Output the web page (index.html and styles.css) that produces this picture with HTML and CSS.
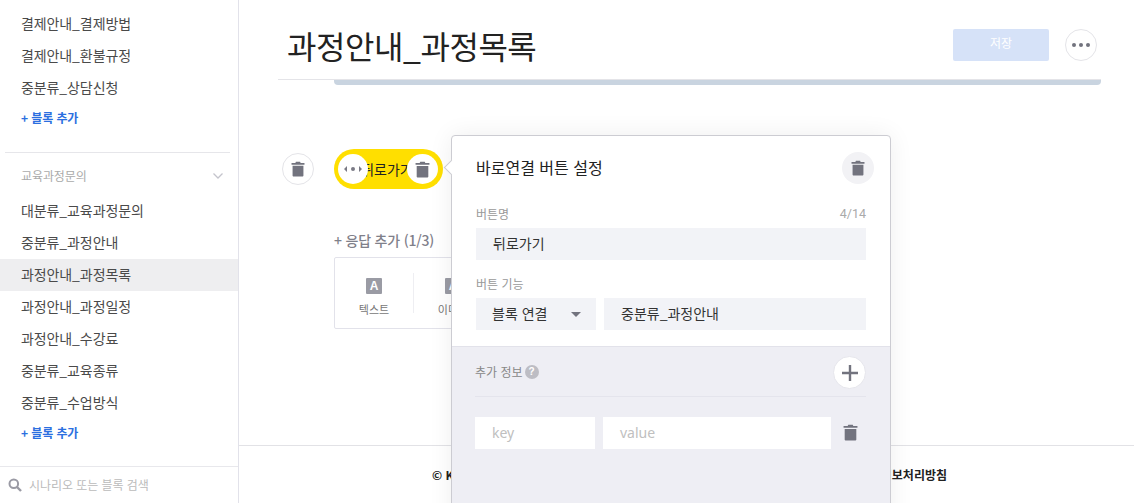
FILE: index.html
```html
<!DOCTYPE html>
<html lang="ko">
<head>
<meta charset="utf-8">
<title>과정안내_과정목록</title>
<link rel="stylesheet" href="styles.css">
</head>
<body>
<svg class="defs" width="0" height="0" aria-hidden="true">
  <symbol id="trash" viewBox="0 0 16 18"><path d="M5.6 0.6h4.8l.6 1.4H15.4v2H.6V2h4.4zM1.8 5.2h12.4V16.4c0 .7-.6 1.2-1.2 1.2H3c-.6 0-1.2-.5-1.2-1.2z"/></symbol>
</svg>
<div class="app">
  <aside class="sidebar">
    <div class="side-scroll">
      <ul class="list">
        <li class="item">결제안내_결제방법</li>
        <li class="item">결제안내_환불규정</li>
        <li class="item">중분류_상담신청</li>
      </ul>
      <div class="add-block">+ 블록 추가</div>
      <hr class="side-rule">
      <div class="group-head">
        <span>교육과정문의</span>
        <svg class="chev" width="12" height="8" viewBox="0 0 12 8"><path d="M1.5 1.5 6 6l4.5-4.5" fill="none" stroke="#c4c4cc" stroke-width="1.3"/></svg>
      </div>
      <ul class="list">
        <li class="item">대분류_교육과정문의</li>
        <li class="item">중분류_과정안내</li>
        <li class="item active">과정안내_과정목록</li>
        <li class="item">과정안내_과정일정</li>
        <li class="item">과정안내_수강료</li>
        <li class="item">중분류_교육종류</li>
        <li class="item">중분류_수업방식</li>
      </ul>
      <div class="add-block">+ 블록 추가</div>
    </div>
    <div class="search">
      <svg width="14" height="14" viewBox="0 0 14 14"><circle cx="5.8" cy="5.8" r="4.3" fill="none" stroke="#9a9aa4" stroke-width="2"/><path d="M9 9l4 4" stroke="#9a9aa4" stroke-width="2.4"/></svg>
      <span class="search-text">시나리오 또는 블록 검색</span>
    </div>
  </aside>

  <main class="main">
    <header class="head">
      <h1 class="title">과정안내_과정목록</h1>
      <div class="head-actions">
        <button class="save">저장</button>
        <button class="more" aria-label="더보기"><i></i><i></i><i></i></button>
      </div>
    </header>

    <div class="content">
      <div class="bar"></div>
      <div class="quick-row">
        <button class="circle trash-btn" aria-label="삭제"><svg class="ico" width="14" height="16"><use href="#trash"/></svg></button>
        <div class="pill">
          <span class="pill-text">뒤로가기</span>
          <span class="pill-handle">
            <svg width="20" height="8" viewBox="0 0 20 8"><path d="M4 1v6L1 4zM16 1v6l3-3z" fill="#7a7a85"/><circle cx="10" cy="4" r="2" fill="#7a7a85"/></svg>
          </span>
          <span class="pill-del"><svg class="ico" width="15" height="17"><use href="#trash"/></svg></span>
        </div>
      </div>
      <div class="add-resp">+ 응답 추가 (1/3)</div>
      <div class="types">
        <div class="type"><span class="a-icon">A</span><span>텍스트</span></div>
        <div class="type"><span class="a-icon">A</span><span>이미지</span></div>
      </div>
    </div>

    <footer class="foot">
      <b>© Kakao Corp. All rights reserved.</b>
      <b>이용약관</b><b>운영정책</b><b>개인정보처리방침</b>
    </footer>

    <section class="pop">
      <span class="pop-arrow"></span>
      <div class="pop-top">
        <div class="pop-title">
          <h2 class="pop-heading">바로연결 버튼 설정</h2>
          <button class="circle-soft" aria-label="삭제"><svg class="ico" width="14" height="16"><use href="#trash"/></svg></button>
        </div>
        <div class="label-row"><span>버튼명</span><span class="count">4/14</span></div>
        <div class="field">뒤로가기</div>
        <div class="label-row second"><span>버튼 기능</span></div>
        <div class="field-row">
          <div class="field select">블록 연결<span class="caret"></span></div>
          <div class="field grow">중분류_과정안내</div>
        </div>
      </div>
      <div class="pop-extra">
        <div class="extra-head">
          <span class="extra-label">추가 정보</span>
          <span class="help">?</span>
          <button class="plus" aria-label="추가"><svg width="16" height="16" viewBox="0 0 16 16"><path d="M6.8 0h2.4v6.8H16v2.4H9.2V16H6.8V9.2H0V6.8h6.8z" fill="#72737e"/></svg></button>
        </div>
        <div class="kv">
          <div class="kv-key">key</div>
          <div class="kv-val">value</div>
          <svg class="ico kv-del" width="15" height="17"><use href="#trash"/></svg>
        </div>
      </div>
    </section>
  </main>
</div>
</body>
</html>
```

FILE: styles.css
```css
* { box-sizing: border-box; }
html, body { margin: 0; height: 100%; overflow: hidden; background: #fff; }
body { font-family: "Noto Sans CJK KR", "Noto Sans", sans-serif; font-size: 14px; color: #222; }
.defs { position: absolute; }
button { font: inherit; padding: 0; cursor: pointer; }
.ico { fill: #72737e; display: block; }

.app { display: flex; height: 503px; }

.sidebar { width: 239px; flex: none; border-right: 1px solid #e2e2ea; display: flex; flex-direction: column; }
.side-scroll { flex: 1; padding-top: 8px; overflow: hidden; }
.list { list-style: none; margin: 0; padding: 0; }
.item { height: 32px; line-height: 30px; padding-left: 21px; font-size: 14px; letter-spacing: -.1px; color: #4a4a4a; white-space: nowrap; }
.item.active { background: #eeeef0; }
.add-block { height: 28px; line-height: 28px; padding-left: 21px; font-size: 12px; font-weight: 700; letter-spacing: -.1px; color: #2b6fe0; }
.side-rule { border: 0; border-top: 1px solid #e6e6ea; margin: 20px 8px 0 5px; }
.group-head { height: 42px; display: flex; align-items: center; justify-content: space-between; padding: 3px 14px 0 21px; font-size: 12px; letter-spacing: -.1px; color: #aaa; }
.search { height: 37px; border-top: 1px solid #e8e8ec; display: flex; align-items: center; gap: 7px; padding-left: 8px; font-size: 12px; color: #bbb; flex: none; }
.search-text { line-height: 16px; margin-top: -1px; letter-spacing: -.05px; }

.main { flex: 1; position: relative; display: flex; flex-direction: column; min-width: 0; overflow: hidden; }
.head { height: 80px; margin: 0 33px 0 39px; border-bottom: 1px solid #e4e4e8; padding: 0 4px 0 9px; display: flex; justify-content: space-between; align-items: flex-start; flex: none; }
.title { margin: 21px 0 0; font-size: 32px; line-height: 48px; font-weight: 400; color: #222; letter-spacing: -.45px; white-space: nowrap; }
.head-actions { display: flex; gap: 16px; margin-top: 29px; }
.save { width: 96px; height: 32px; border: 0; border-radius: 2px; background: #d6e2f8; color: #fff; font-size: 12px; padding-bottom: 5px; }
.more { width: 32px; height: 32px; border-radius: 50%; background: #fff; border: 1px solid #e4e4e8; display: flex; align-items: center; justify-content: center; gap: 3px; }
.more i { width: 4px; height: 4px; border-radius: 50%; background: #72737e; }

.content { flex: 1; margin: 0 33px 0 43px; min-height: 0; }
.bar { height: 5px; margin-left: 52px; background: #c9d4e0; border-radius: 0 0 4px 4px; }
.quick-row { display: flex; align-items: center; gap: 20px; margin-top: 64px; }
.circle { width: 32px; height: 32px; border-radius: 50%; border: 1px solid #e4e4e8; background: #fff; display: flex; align-items: center; justify-content: center; }
.pill { position: relative; width: 109px; height: 40px; border-radius: 20px; background: #ffdf00; display: flex; align-items: center; justify-content: center; padding-right: 3px; font-size: 14px; color: #222; }
.pill-handle, .pill-del { position: absolute; top: 5px; width: 30px; height: 30px; border-radius: 50%; background: #fff; display: flex; align-items: center; justify-content: center; }
.pill-handle { left: 4px; }
.pill-del { right: 5px; width: 31px; }
.add-resp { margin: 41px 0 0 52px; font-size: 14px; line-height: 20px; font-weight: 500; letter-spacing: -.2px; color: #7f808a; }
.types { margin: 7px 0 0 52px; width: 330px; height: 72px; border: 1px solid #e2e2ea; border-radius: 2px; background: #fff; display: flex; align-items: center; }
.type { width: 79px; height: 40px; padding-top: 5px; border-right: 1px solid #eeeef2; display: flex; flex-direction: column; align-items: center; gap: 7px; font-size: 11px; line-height: 17px; color: #777; }
.a-icon { width: 16px; height: 16px; flex: none; background: #9a9ba4; color: #fff; font: 700 12px/16px "Liberation Sans", sans-serif; text-align: center; border-radius: 1px; }

.foot { height: 58px; flex: none; border-top: 1px solid #e2e2e6; display: flex; align-items: center; justify-content: center; gap: 45.5px; font-size: 12px; padding-left: 6px; color: #222; }
.foot b { font-weight: 700; }

.pop { position: absolute; left: 212px; top: 135px; width: 440px; height: 400px; background: #fff; border: 1px solid #ccccd2; border-radius: 4px 4px 0 0; box-shadow: 0 0 24px rgba(0,0,0,.07); }
.pop-arrow { position: absolute; left: -6px; top: 26px; width: 11px; height: 11px; background: #fff; border-left: 1px solid #ccccd2; border-bottom: 1px solid #ccccd2; transform: rotate(45deg); }
.pop-top { position: relative; padding: 16px 24px; height: 210px; }
.pop-title { display: flex; align-items: center; justify-content: space-between; height: 32px; margin-right: -8px; }
.pop-heading { margin: 0 0 2px; font-size: 16px; font-weight: 400; color: #222; }
.circle-soft { width: 32px; height: 32px; border: 0; border-radius: 50%; background: #f2f2f5; display: flex; align-items: center; justify-content: center; }
.label-row { display: flex; justify-content: space-between; align-items: center; margin-top: 21px; height: 18px; padding-bottom: 2px; font-size: 12px; color: #999; margin-bottom: 5px; }
.label-row.second { margin-top: 15px; }
.count { color: #aaa; font-family: Roboto, sans-serif; font-size: 12.5px; }
.field { height: 32px; line-height: 31px; background: #f2f3f7; padding-left: 17px; font-size: 14px; color: #333; }
.field-row { display: flex; gap: 8px; }
.select { width: 120px; flex: none; padding-left: 16px; position: relative; }
.grow { flex: 1; }
.caret { position: absolute; right: 15px; top: 14px; border-left: 5.5px solid transparent; border-right: 5.5px solid transparent; border-top: 5px solid #72737e; }
.pop-extra { height: 190px; background: #eeeef4; border-top: 1px solid #e2e2ea; padding: 9px 24px 0 23px; }
.extra-head { display: flex; align-items: center; height: 41px; padding-bottom: 7px; border-bottom: 1px solid #e4e4ec; gap: 2px; font-size: 12px; color: #888; }
.extra-label { padding-bottom: 2px; }
.help { width: 14px; height: 14px; border-radius: 50%; background: #bdbdc4; color: #fff; font: 700 10px/14px "Liberation Sans", sans-serif; text-align: center; margin-bottom: 1px; }
.plus { margin-left: auto; width: 33px; height: 33px; border-radius: 50%; border: 1px solid #e6e6ec; background: #fff; display: flex; align-items: center; justify-content: center; }
.kv { display: flex; align-items: center; margin-top: 20px; gap: 8px; }
.kv-key, .kv-val { height: 32px; line-height: 31px; background: #fff; padding-left: 17px; font-family: "Noto Sans", sans-serif; font-size: 14px; color: #c0c0c0; }
.kv-key { width: 120px; }
.kv-val { width: 228px; }
.kv-del { margin-left: 4px; margin-top: -2px; }
```
